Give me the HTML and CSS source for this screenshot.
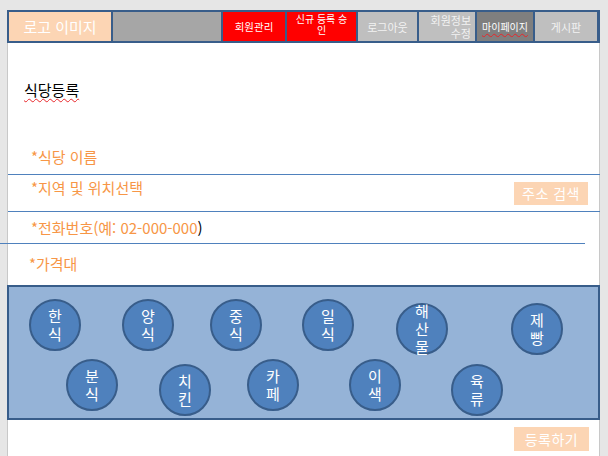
FILE: index.html
```html
<!DOCTYPE html>
<html lang="ko">
<head>
<meta charset="utf-8">
<title>식당등록</title>
<link rel="stylesheet" href="styles.css">
</head>
<body>
<div class="page">
  <header class="topbar">
    <div class="cell logo">로고 이미지</div>
    <div class="cell blank"></div>
    <div class="cell red w62 mid">회원관리</div>
    <div class="cell red w69 approve">신규 등록 승<br>인</div>
    <div class="cell gray w59 mid">로그아웃</div>
    <div class="cell gray w56 info">회원정보<br>수정</div>
    <div class="cell dark w56 mid"><span class="squiggle">마이페이지</span></div>
    <div class="cell gray w62 mid board">게시판</div>
  </header>

  <h1 class="title"><span class="squiggle">식당등록</span></h1>

  <div class="field first">*식당 이름</div>
  <div class="rule"></div>

  <div class="row">
    <div class="field">*지역 및 위치선택</div>
    <button class="btn addr">주소 검색</button>
  </div>
  <div class="rule r2"></div>

  <div class="field phone">*전화번호(예: 02-000-000<span class="black">)</span></div>
  <div class="rule r3"></div>

  <div class="field price">*가격대</div>

  <div class="panel">
    <div class="circle c1">한<br>식</div>
    <div class="circle c2">양<br>식</div>
    <div class="circle c3">중<br>식</div>
    <div class="circle c4">일<br>식</div>
    <div class="circle c5">해<br>산<br>물</div>
    <div class="circle c6">제<br>빵</div>
    <div class="circle c7">분<br>식</div>
    <div class="circle c8">치<br>킨</div>
    <div class="circle c9">카<br>페</div>
    <div class="circle c10">이<br>색</div>
    <div class="circle c11">육<br>류</div>
  </div>

  <div class="actions">
    <button class="btn submit">등록하기</button>
  </div>
</div>
</body>
</html>
```

FILE: styles.css
```css
* { box-sizing: border-box; }
html, body { margin: 0; padding: 0; }
body {
  background: #e6e6e6;
  font-family: "Noto Sans CJK KR", "Noto Sans", sans-serif;
  height: 456px;
  overflow: hidden;
}
.page {
  margin: 10px 0 0 7px;
  width: 593px;
  min-height: 446px;
  background: #fff;
  border-left: 1px solid #c8c8c8;
  border-right: 1px solid #c8c8c8;
}

/* header */
.topbar {
  display: flex;
  gap: 2px;
  padding: 2px;
  margin: 0 -1px 0 -1px;
  height: 33px;
  background: #385d8a;
}
.cell {
  height: 29px;
  color: #fff;
  font-size: 11px;
  line-height: 12px;
  overflow: hidden;
}
.mid { display: flex; align-items: center; justify-content: center; }
.logo {
  width: 102px;
  background: #fcd5b4;
  font-size: 15px;
  display: flex; align-items: center; justify-content: center;
}
.blank { width: 108px; background: #a6a6a6; }
.red { background: #ff0000; }
.gray { background: #bfbfbf; color: #f2f2f2; }
.dark { background: #7f7f7f; font-size: 10px; }
.w62 { width: 62px; }
.w69 { width: 69px; }
.w59 { width: 59px; }
.w56 { width: 56px; }
.red.w62 { font-size: 10.5px; }
.approve {
  font-size: 10px;
  line-height: 11px;
  text-align: center;
  padding-top: 1px;
}
.info {
  text-align: right;
  padding: 2px 4px 0 0;
  line-height: 13px;
  font-size: 11px;
}
.board { font-size: 11px; }
.squiggle {
  text-decoration: underline wavy #e8262a;
  text-decoration-thickness: 1px;
  text-underline-offset: 2px;
}

/* title */
.title {
  margin: 37px 0 0 0;
  padding-left: 16px;
  font-size: 15px;
  line-height: 20px;
  font-weight: normal;
  color: #000;
}

/* form */
.field {
  color: #f79646;
  font-size: 15px;
  line-height: 20px;
  padding-left: 23px;
}
.field.first { margin-top: 47px; }
.rule {
  height: 1px;
  background: #4f81bd;
  margin: 7px -1px 0 0;
}
.row {
  display: flex;
  justify-content: space-between;
  align-items: flex-start;
  margin-top: 3px;
  padding-right: 11px;
}
.btn {
  border: 0;
  background: #fcd5b4;
  color: #fff;
  font-family: inherit;
  font-size: 14px;
  padding: 0;
  width: 74px;
  height: 23px;
  line-height: 23px;
  letter-spacing: 0.5px;
}
.btn.addr { margin-top: 4px; }
.rule.r2 { margin-top: 6px; }
.field.phone { margin-top: 6px; }
.black { color: #000; }
.rule.r3 { margin: 5px 0 0 -8px; width: 585px; }
.field.price { margin-top: 10px; padding-left: 21px; }

/* panel */
.panel {
  position: relative;
  margin: 11px -1px 0 -1px;
  height: 135px;
  background: #95b3d7;
  border: 2px solid #385d8a;
}
.circle {
  position: absolute;
  width: 52px;
  height: 52px;
  border-radius: 50%;
  background: #4f81bd;
  border: 2px solid #385d8a;
  color: #fff;
  font-size: 15px;
  line-height: 18px;
  text-align: center;
  display: flex;
  align-items: center;
  justify-content: center;
}
.c1 { left: 20px; top: 12px; }
.c2 { left: 113px; top: 12px; }
.c3 { left: 201px; top: 12px; }
.c4 { left: 293px; top: 12px; }
.c5 { left: 387px; top: 16px; }
.c6 { left: 502px; top: 16px; }
.c7 { left: 57px; top: 72px; }
.c8 { left: 150px; top: 77px; }
.c9 { left: 238px; top: 72px; }
.c10 { left: 340px; top: 72px; }
.c11 { left: 442px; top: 77px; }

.actions {
  display: flex;
  justify-content: flex-end;
  padding-right: 10px;
  margin-top: 7px;
}
.btn.submit { width: 75px; height: 24px; line-height: 24px; }
```
